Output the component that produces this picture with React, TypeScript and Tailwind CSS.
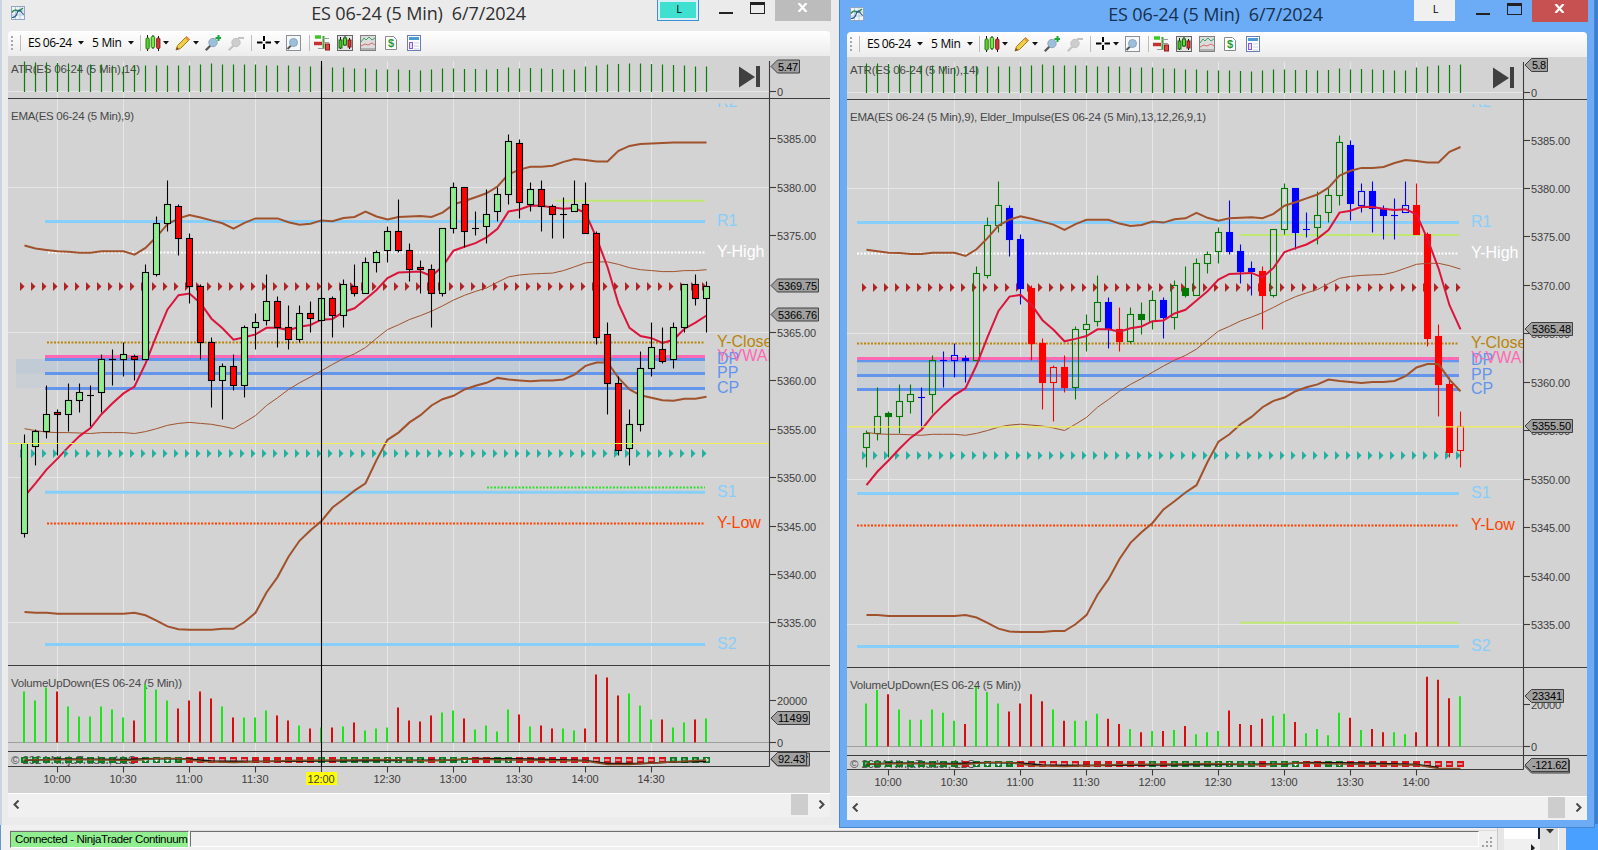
import type { ReactNode } from 'react'

type Bar = [number, number, number, number]

// open, high, low, close for each 5 minute bar, starting at 9:45
const bars: Bar[] = [
  [5344.25, 5354.5, 5343.75, 5353.5],
  [5353.25, 5355, 5351.25, 5354.75],
  [5354.75, 5359.5, 5354, 5356.5],
  [5356.75, 5357, 5352.25, 5356.5],
  [5356.5, 5359.75, 5354.75, 5358],
  [5358, 5359.75, 5356.75, 5358.75],
  [5358.5, 5359.5, 5355.25, 5358.5],
  [5358.75, 5362.75, 5356.75, 5362.25],
  [5362.25, 5363.25, 5359.5, 5362.25],
  [5362.25, 5364, 5360.5, 5362.75],
  [5362.5, 5362.75, 5360, 5362.25],
  [5362.25, 5372, 5362.25, 5371.25],
  [5371, 5377, 5370.75, 5376.25],
  [5376.25, 5380.75, 5375.5, 5378.25],
  [5378, 5378.25, 5373, 5374.75],
  [5374.75, 5375.25, 5368, 5369.75],
  [5369.75, 5370, 5362.25, 5364],
  [5364, 5364.5, 5357.25, 5360],
  [5360, 5361.75, 5356, 5361.5],
  [5361.5, 5362.75, 5359, 5359.5],
  [5359.5, 5365.75, 5358.25, 5365.5],
  [5365.5, 5367, 5363.25, 5366],
  [5366.25, 5371, 5365.75, 5368.25],
  [5368.25, 5368.75, 5363.5, 5365.5],
  [5365.5, 5367.75, 5363.25, 5364.25],
  [5364.25, 5367.75, 5364, 5367],
  [5367, 5368.25, 5365, 5366.5],
  [5366.25, 5369.5, 5365.5, 5368.5],
  [5368.5, 5368.75, 5364.5, 5366.75],
  [5366.75, 5370.5, 5365.5, 5370],
  [5369.75, 5372, 5368.75, 5369],
  [5369, 5372.75, 5369, 5372.25],
  [5372.25, 5373.5, 5371.25, 5373.25],
  [5373.5, 5376, 5372.25, 5375.5],
  [5375.5, 5378.75, 5373.25, 5373.5],
  [5373.5, 5374.25, 5370.25, 5371.5],
  [5371.75, 5372.5, 5369, 5371.5],
  [5371.5, 5372, 5365.5, 5369],
  [5369, 5375.75, 5368.75, 5375.75],
  [5375.75, 5380.5, 5375.25, 5380],
  [5380, 5380, 5373.75, 5375.5],
  [5375.75, 5377.5, 5375, 5375.75],
  [5376, 5379.75, 5374.25, 5377.25],
  [5377.5, 5380, 5376.5, 5379.25],
  [5379.25, 5385.5, 5378.25, 5384.75],
  [5384.5, 5385, 5376.75, 5378.5],
  [5378.25, 5380.5, 5377.5, 5379.75],
  [5379.75, 5380.75, 5375.5, 5378],
  [5378, 5378.25, 5374.75, 5377.25],
  [5377.25, 5379, 5374.75, 5377.25],
  [5377.5, 5380.75, 5377.5, 5378.25],
  [5378.25, 5380.5, 5375.25, 5375.25],
  [5375.25, 5375.5, 5363.75, 5364.5],
  [5364.75, 5366, 5356.5, 5359.75],
  [5359.75, 5360.5, 5352.25, 5352.75],
  [5353, 5357, 5351.25, 5355.5],
  [5355.5, 5363, 5354.75, 5361.25],
  [5361.25, 5366, 5360.5, 5363.5],
  [5363.25, 5365.5, 5361.75, 5362],
  [5362.25, 5366, 5361.25, 5365.5],
  [5365.5, 5370, 5365, 5370],
  [5370, 5371, 5367.75, 5368.5],
  [5368.5, 5370.25, 5365, 5369.75],
]

const upper = [
  5374, 5373.7, 5373.55, 5373.4, 5373.35, 5373.25, 5373.25, 5373.4, 5373.4, 5373.4, 5373.05, 5373.75, 5374.9,
  5376.2, 5376.8, 5377.15, 5376.9, 5376.6, 5376.3, 5375.75, 5376.35, 5376.8, 5376.8, 5376.8, 5376.4, 5376.15,
  5376.25, 5376.6, 5376.5, 5376.85, 5376.95, 5377.5, 5377, 5376.7, 5376.95, 5377, 5377.05, 5376.95, 5377.4,
  5378.25, 5378.6, 5379, 5379.4, 5380.1, 5381.35, 5381.85, 5382.15, 5382.15, 5382.25, 5382.65, 5382.95, 5382.85,
  5382.7, 5382.7, 5383.8, 5384.3, 5384.5, 5384.55, 5384.6, 5384.65, 5384.65, 5384.65, 5384.65,
]

const middle = [
  5355.05, 5354.85, 5354.7, 5354.65, 5354.65, 5354.6, 5354.55, 5354.65, 5354.65, 5354.65, 5354.55, 5354.75, 5355.05,
  5355.4, 5355.6, 5355.7, 5355.6, 5355.5, 5355.3, 5355.05, 5355.7, 5356.4, 5357.45, 5358.25, 5359.1, 5359.8,
  5360.4, 5361.05, 5361.7, 5362.3, 5362.8, 5363.45, 5364.4, 5365.3, 5365.8, 5366.35, 5366.75, 5367.2, 5367.75,
  5368.35, 5368.85, 5369.25, 5369.6, 5370.2, 5370.75, 5370.95, 5371.05, 5371.1, 5371.15, 5371.4, 5371.8, 5372.2,
  5372.3, 5372.3, 5372.05, 5371.7, 5371.5, 5371.4, 5371.3, 5371.3, 5371.4, 5371.4, 5371.5,
]

// the first stretch is nearly flat, so it is kept apart from the mirrored values
const lowerStart = [
  5336.1, 5336, 5336, 5335.9, 5335.9, 5335.9, 5335.9, 5335.9, 5335.9, 5335.9, 5336, 5335.75, 5335.2, 5334.6, 5334.3,
  5334.25, 5334.25, 5334.25, 5334.35, 5334.35,
]
const lower = middle.map((m, i) => lowerStart[i] ?? 2 * m - upper[i])

const ema = bars.reduce<number[]>((acc, bar) => {
  acc.push(acc.length ? acc[acc.length - 1] * 0.8 + bar[3] * 0.2 : 5348.06)
  return acc
}, [])

const atr = [
  30, 29, 29, 28.5, 28, 27, 27, 27, 26, 25, 26, 26, 26, 26, 26, 26, 27, 28, 27, 27, 27, 27, 26, 26, 26, 25, 25, 25, 24,
  24, 23, 23, 22, 22, 22, 21.5, 21, 22, 23, 23, 22.5, 22.5, 22, 22.5, 24, 23, 23.5, 23, 22.5, 22, 22, 25, 26, 27, 27.5,
  28, 28, 27.5, 27, 26.5, 26, 25, 25,
]

const volume = [
  51, 42, 55, 51, 36, 26, 26, 36, 33, 25, 22, 58, 53, 42, 34, 42, 51, 44, 36, 25, 25, 25, 32, 27, 22, 17, 14, 15, 15,
  16, 20, 12, 14, 15, 35, 22, 21, 27, 30, 32, 24, 13, 17, 11, 33, 28, 16, 17, 14, 14, 12, 14, 68, 65, 47, 49, 37, 23,
  23, 15, 20, 23, 24,
]
const volumeColors = 'gggrggggggrgggrrrrgrgggrrgrgrgrgggrrrrggrggggrgrrggrrrrgggrggrg'

// w and R mark bars with a white centre in the bottom panel
const trend = 'ggggggggggrwwwgrRRRRRrrrrrrgrggggwwggrggwrrgwrrrrrrrRRRRRRRgggw'

// offsets of the two lines that run through the bottom panel, as [bar, dy]
const signalBlack: [number, number][] = [
  [0, 0.5], [3, -1], [9, -0.5], [12, -1.5], [15, -1], [17, 1], [21, 1.5], [27, 1], [34, 0.5], [39, 0], [41, -1.5], [46, -1], [51, 0.5], [53, 3.5], [56, 3.5], [59, 2], [62, 1.5],
]
const signalBrown: [number, number][] = [
  [0, 0], [5, -0.5], [10, 0.5], [12, -1.5], [14, -1.5], [16, 1.5], [19, 2.5], [24, 0.5], [33, -0.5], [37, 1], [40, -1], [44, 0], [51, 1], [53, 4.5], [55, 4.5], [58, 2.5], [62, 0],
]

const impulse = 'ggggggbgbbbgggbbrrrrgggbrgggbgggggbbbrggbbgggbbbbbbrrrrr'
const impulseColors: Record<string, string> = { g: '#007a00', b: '#0000ff', r: '#ff0000' }

interface Level {
  y: number
  color: string
  from: number
  label?: string
  kind?: 'dotted'
  width?: number
}

interface Tag {
  y: number
  right: number
  text: string
}

interface ChartConfig {
  left: number
  top: number
  right: number
  bottom: number
  axis: number
  x0: number
  first: number
  last: number
  y5380: number
  scale: number
  separators: number[]
  atrBase: number
  volumeBase: number
  volumeScale: number
  timeLine: number
  trendY: number
  levels: Level[]
  levelEnd: number
  zone: { from: number; top: number; mid: number; bottom: number }
  priceLine: number
  arrows: [number, number]
  prices: { p: number; y: number }[]
  tags: Tag[]
  times: string[]
  firstTime: number
  title: string
  titleWidth: number
  cursor?: number
  impulse?: boolean
}

const leftChart: ChartConfig = {
  left: 8,
  top: 56,
  right: 830,
  bottom: 793,
  axis: 769.5,
  x0: 24.5,
  first: 0,
  last: 62,
  y5380: 187.5,
  scale: 9.667,
  separators: [98.5, 665.5, 751.5],
  atrBase: 91.5,
  volumeBase: 742.5,
  volumeScale: 1,
  timeLine: 766.5,
  trendY: 760,
  levelEnd: 705,
  levels: [
    { y: 102.5, color: '#87cefa', from: 0, label: 'R2', width: 0 },
    { y: 200.8, color: '#bfe872', from: 555, width: 2 },
    { y: 221.5, color: '#87cefa', from: 45, label: 'R1' },
    { y: 252.5, color: '#ffffff', from: 48, label: 'Y-High', kind: 'dotted' },
    { y: 342.5, color: '#b8860b', from: 47, label: 'Y-Close', kind: 'dotted' },
    { y: 359.5, color: '#6495ed', from: 45, label: 'DP' },
    { y: 356.5, color: '#ff69b4', from: 45, label: 'Y-VWAP' },
    { y: 373.5, color: '#6495ed', from: 45, label: 'PP' },
    { y: 388.5, color: '#6495ed', from: 45, label: 'CP' },
    { y: 487.5, color: '#32e032', from: 487, kind: 'dotted' },
    { y: 492.3, color: '#87cefa', from: 45, label: 'S1' },
    { y: 523.5, color: '#ff4500', from: 47, label: 'Y-Low', kind: 'dotted' },
    { y: 644.5, color: '#87cefa', from: 45, label: 'S2' },
  ],
  zone: { from: 16, top: 359, mid: 373.5, bottom: 388 },
  priceLine: 443.5,
  arrows: [286.5, 453.5],
  prices: [
    { p: 5385, y: 138.5 },
    { p: 5380, y: 187.5 },
    { p: 5375, y: 235.5 },
    { p: 5365, y: 332.5 },
    { p: 5360, y: 380.5 },
    { p: 5355, y: 429.5 },
    { p: 5350, y: 477.5 },
    { p: 5345, y: 526.5 },
    { p: 5340, y: 574.5 },
    { p: 5335, y: 622.5 },
  ],
  tags: [
    { y: 66.5, right: 800, text: '5.47' },
    { y: 285.5, right: 819, text: '5369.75' },
    { y: 314.5, right: 819, text: '5366.76' },
    { y: 718, right: 810, text: '11499' },
    { y: 759.5, right: 810, text: '-92.437' },
    { y: 759, right: 807, text: '92.43' },
  ],
  times: ['10:00', '10:30', '11:00', '11:30', '12:00', '12:30', '13:00', '13:30', '14:00', '14:30'],
  firstTime: 57.5,
  title: 'EMA(ES 06-24 (5 Min),9)',
  titleWidth: 123,
  cursor: 321.5,
}

const rightChart: ChartConfig = {
  left: 847,
  top: 57,
  right: 1587,
  bottom: 796,
  axis: 1523.5,
  x0: 855.5,
  first: 1,
  last: 55,
  y5380: 188.7,
  scale: 9.69,
  separators: [99.5, 667.5, 755.5],
  atrBase: 92.5,
  volumeBase: 746.5,
  volumeScale: 1.026,
  timeLine: 769.5,
  trendY: 764,
  levelEnd: 1459,
  levels: [
    { y: 102, color: '#87cefa', from: 0, label: 'R2', width: 0 },
    { y: 222.5, color: '#87cefa', from: 857, label: 'R1' },
    { y: 235, color: '#bfe872', from: 1240, width: 2 },
    { y: 253.5, color: '#ffffff', from: 857, label: 'Y-High', kind: 'dotted' },
    { y: 343.5, color: '#b8860b', from: 857, label: 'Y-Close', kind: 'dotted' },
    { y: 360.8, color: '#6495ed', from: 857, label: 'DP' },
    { y: 358.5, color: '#ff69b4', from: 857, label: 'Y-VWAP' },
    { y: 375.5, color: '#6495ed', from: 857, label: 'PP' },
    { y: 389.5, color: '#6495ed', from: 857, label: 'CP' },
    { y: 493.5, color: '#87cefa', from: 857, label: 'S1' },
    { y: 525.5, color: '#ff4500', from: 857, label: 'Y-Low', kind: 'dotted' },
    { y: 622.8, color: '#bfe872', from: 1240, width: 2 },
    { y: 646.5, color: '#87cefa', from: 857, label: 'S2' },
  ],
  zone: { from: 857, top: 361, mid: 375, bottom: 389 },
  priceLine: 426.8,
  arrows: [287.5, 455.5],
  prices: [
    { p: 5385, y: 140.5 },
    { p: 5380, y: 188.5 },
    { p: 5375, y: 236.5 },
    { p: 5370, y: 285.5 },
    { p: 5365, y: 333.5 },
    { p: 5360, y: 382.5 },
    { p: 5355, y: 430.5 },
    { p: 5350, y: 479.5 },
    { p: 5345, y: 527.5 },
    { p: 5340, y: 576.5 },
    { p: 5335, y: 624.5 },
  ],
  tags: [
    { y: 65, right: 1548, text: '5.8' },
    { y: 329, right: 1573, text: '5365.48' },
    { y: 426, right: 1573, text: '5355.50' },
    { y: 696, right: 1564, text: '23341' },
    { y: 766.5, right: 1570, text: '' },
    { y: 765, right: 1569, text: '-121.62' },
  ],
  times: ['10:00', '10:30', '11:00', '11:30', '12:00', '12:30', '13:00', '13:30', '14:00'],
  firstTime: 888.5,
  title: 'EMA(ES 06-24 (5 Min),9), Elder_Impulse(ES 06-24 (5 Min),13,12,26,9,1)',
  titleWidth: 356,
  impulse: true,
}

function Chart({ c }: { c: ChartConfig }) {
  const x = (i: number) => c.x0 + i * 11
  const y = (p: number) => c.y5380 + (5380 - p) * c.scale
  const px = (p: number) => Math.floor(y(p)) + 0.5
  const range = bars.map((_, i) => i).filter((i) => i >= c.first && i <= c.last)
  const points = (values: number[]) => range.map((i) => `${x(i)},${y(values[i]).toFixed(1)}`).join(' ')
  const signal = (values: [number, number][]) =>
    values
      .filter(([i]) => i <= c.last)
      .map(([i, dy]) => `${x(Math.max(i, c.first))},${c.trendY + dy}`)
      .join(' ')
  const labelX = c.levelEnd + 12
  const clipId = `labels-${c.left}`
  const width = c.right - c.left
  const height = c.bottom - c.top

  const candles = range.map((i) => {
    const [o, h, l, cl] = bars[i]
    const top = px(Math.max(o, cl))
    const bottom = px(Math.min(o, cl))
    const up = cl > o
    const stroke = c.impulse ? impulseColors[impulse[i]] : '#000000'
    const fill = c.impulse ? (up ? 'none' : stroke) : up ? '#90ee90' : '#ff0000'
    return (
      <g key={i} stroke={stroke} strokeWidth={1.1}>
        <line x1={x(i)} x2={x(i)} y1={px(h)} y2={top} />
        <line x1={x(i)} x2={x(i)} y1={bottom} y2={px(l)} />
        {o === cl ? (
          <line x1={x(i) - 3.5} x2={x(i) + 3.5} y1={top} y2={top} />
        ) : (
          <rect x={x(i) - 3} y={top} width={6} height={bottom - top} fill={fill} />
        )}
      </g>
    )
  })

  const emaLine = <polyline points={points(ema)} fill="none" stroke="#dc143c" strokeWidth={2} />
  const bands = (
    <g fill="none" stroke="#a0522d">
      <polyline points={points(upper)} strokeWidth={2} />
      <polyline points={points(middle)} strokeWidth={1} />
      <polyline points={points(lower)} strokeWidth={2} />
    </g>
  )

  return (
    <svg
      className="block shrink-0 bg-[#d3d3d3]"
      width={width}
      height={height}
      viewBox={`${c.left} ${c.top} ${width} ${height}`}
      fontFamily="'Liberation Sans', Arial, sans-serif"
    >
      <defs>
        <clipPath id={clipId}>
          <rect x={c.left} y={c.separators[0] + 5} width={c.axis - c.left} height={600} />
        </clipPath>
      </defs>

      {/* Grid */}
      <g stroke="#e6e6e6" strokeWidth={1}>
        {c.times.map((t, i) => (
          <line key={t} x1={c.firstTime + i * 66} x2={c.firstTime + i * 66} y1={c.top + 5} y2={c.timeLine} />
        ))}
        {c.prices
          .filter(({ p }) => [5380, 5365, 5350, 5335].includes(p))
          .map(({ p, y: py }) => (
            <line key={p} x1={c.left} x2={c.axis} y1={py} y2={py} />
          ))}
        <line x1={c.left} x2={c.axis} y1={c.atrBase} y2={c.atrBase} />
      </g>
      <line x1={c.left} x2={c.axis} y1={c.volumeBase} y2={c.volumeBase} stroke="#a0a0a0" />

      {/* Pivot zone */}
      <rect x={c.zone.from} y={c.zone.top} width={c.levelEnd - c.zone.from} height={c.zone.mid - c.zone.top} fill="#87b4dc" opacity={0.25} />
      <rect x={c.zone.from} y={c.zone.mid} width={c.levelEnd - c.zone.from} height={c.zone.bottom - c.zone.mid} fill="#9bbede" opacity={0.18} />

      {/* Levels */}
      {c.levels.map((l) =>
        l.width === 0 ? null : (
          <line
            key={`${l.color}-${l.y}`}
            x1={l.from}
            x2={c.levelEnd}
            y1={l.y}
            y2={l.y}
            stroke={l.color}
            strokeWidth={l.kind === 'dotted' ? 2 : (l.width ?? 3)}
            strokeDasharray={l.kind === 'dotted' ? '2 1.5' : undefined}
          />
        ),
      )}
      <g clipPath={`url(#${clipId})`} fontSize={16}>
        {c.levels
          .filter((l) => l.label)
          .map((l) => (
            <text key={l.label} x={labelX} y={Math.round(l.y + 4.6)} fill={l.color}>
              {l.label}
            </text>
          ))}
      </g>

      {!c.impulse && bands}
      {!c.impulse && emaLine}

      {/* Arrow rows */}
      {range.map((i) => (
        <g key={i}>
          <path d={`M${x(i) - 4.5} ${c.arrows[0] - 4.5}l4.5 4.5l-4.5 4.5z`} fill="#b22222" />
          <path d={`M${x(i) - 4.5} ${c.arrows[1] - 4.5}l4.5 4.5l-4.5 4.5z`} fill="#20b2a0" />
        </g>
      ))}

      {candles}
      {c.impulse && bands}
      {c.impulse && emaLine}
      <line x1={c.left} x2={c.axis} y1={c.priceLine} y2={c.priceLine} stroke="#f0ee50" strokeWidth={1.2} />

      {/* Panel titles */}
      <g fontSize={11.5} fill="#484848">
        <text x={c.left + 3} y={c.top + 16.5} textLength={129}>
          ATR(ES 06-24 (5 Min),14)
        </text>
        <text x={c.left + 3} y={c.separators[0] + 21.5} textLength={c.titleWidth}>
          {c.title}
        </text>
        <text x={c.left + 3} y={c.separators[1] + 21.5} textLength={171}>
          VolumeUpDown(ES 06-24 (5 Min))
        </text>
        <text x={c.left + 3} y={c.trendY + 4} textLength={125}>
          © 2024 NinjaTrader, LLC
        </text>
      </g>

      {/* ATR and volume */}
      {range.map((i) => (
        <g key={i}>
          <line x1={x(i)} x2={x(i)} y1={c.atrBase + 0.5} y2={c.atrBase - atr[i]} stroke="#0b7d0b" strokeWidth={1.2} />
          <line
            x1={x(i) - 0.5}
            x2={x(i) - 0.5}
            y1={c.volumeBase}
            y2={c.volumeBase - volume[i] * c.volumeScale}
            stroke={volumeColors[i] === 'g' ? '#1ae61a' : '#d80c0c'}
            strokeWidth={2}
          />
        </g>
      ))}

      {/* Trend strip */}
      <line x1={x(c.first) - 4} x2={x(c.last) + 4} y1={c.trendY} y2={c.trendY} stroke="#a8e4d8" strokeWidth={4} />
      {range.map((i) => {
        const t = trend[i]
        const color = t === 'r' || t === 'R' ? '#d8121a' : '#0f7a22'
        return (
          <g key={i}>
            <rect x={x(i) - 3.5} y={c.trendY - 3} width={7} height={6} fill={color} />
            {t === 'R' && <rect x={x(i) - 3} y={c.trendY - 0.5} width={5} height={1} fill="#ffffff" />}
            {t === 'w' && <path d={`M${x(i) - 2} ${c.trendY}h4M${x(i)} ${c.trendY - 2}v4`} stroke="#ffffff" strokeWidth={1.4} />}
            {t === 'g' && <rect x={x(i) - 1.5} y={c.trendY - 1.5} width={2.5} height={2} fill="#8fb58f" />}
          </g>
        )
      })}
      <polyline points={signal(signalBlack)} fill="none" stroke="#111111" strokeWidth={1.5} />
      <polyline points={signal(signalBrown)} fill="none" stroke="#8a4a20" strokeWidth={1.7} />

      {/* Skip to latest bar */}
      <g fill="#404040">
        <path d={`M${c.axis - 30.5} ${c.top + 10.5}l16 10.5l-16 10.5z`} />
        <rect x={c.axis - 13.5} y={c.top + 10} width={4} height={21} />
      </g>

      {/* Axes */}
      <g stroke="#3c3c3c" strokeWidth={1.1}>
        {c.separators.map((s) => (
          <line key={s} x1={c.left} x2={c.right} y1={s} y2={s} />
        ))}
        <line x1={c.left} x2={c.axis} y1={c.timeLine} y2={c.timeLine} />
        <line x1={c.axis} x2={c.axis} y1={c.top + 5} y2={c.timeLine} />
        {[...c.prices.map((p) => p.y), c.atrBase, c.volumeBase, c.volumeBase - 42].map((ty) => (
          <line key={ty} x1={c.axis} x2={c.axis + 6.5} y1={ty} y2={ty} />
        ))}
        {c.times.map((t, i) => (
          <line key={t} x1={c.firstTime + i * 66} x2={c.firstTime + i * 66} y1={c.timeLine} y2={c.timeLine + 6} />
        ))}
      </g>
      {c.cursor && (
        <>
          <line x1={c.cursor} x2={c.cursor} y1={c.top + 5} y2={c.timeLine} stroke="#000000" strokeWidth={1.1} />
          <rect x={306} y={772} width={31} height={13} fill="#ffff00" />
        </>
      )}
      <g fontSize={11} fill="#404040">
        {c.prices.map(({ p, y: py }) => (
          <text key={p} x={c.axis + 7.5} y={py + 4} textLength={39}>
            {p.toFixed(2)}
          </text>
        ))}
        <text x={c.axis + 7.5} y={c.atrBase + 4}>0</text>
        <text x={c.axis + 7.5} y={c.volumeBase + 4}>0</text>
        <text x={c.axis + 7.5} y={c.volumeBase - 38} textLength={30}>20000</text>
        {c.times.map((t, i) => (
          <text key={t} x={c.firstTime + i * 66 - 14} y={c.timeLine + 16.5} textLength={27}>
            {t}
          </text>
        ))}
      </g>

      {/* Value tags */}
      {c.tags.map((tag) => (
        <g key={tag.text}>
          <path
            d={`M${c.axis + 1.5} ${tag.y}l6.5 -6.5H${tag.right - 0.5}v13H${c.axis + 8}z`}
            fill="#a0a0a0"
            stroke="#404040"
          />
          <text x={c.axis + 8.5} y={tag.y + 4} fontSize={11} fill="#000000" textLength={tag.right - c.axis - 10.5}>
            {tag.text}
          </text>
        </g>
      ))}
    </svg>
  )
}

function Caret({ className }: { className: string }) {
  return (
    <svg className={`shrink-0 ${className}`} width="6" height="4" viewBox="0 0 6 4">
      <path d="M0 0h6L3 3.5z" fill="#111" />
    </svg>
  )
}

function Separator({ className }: { className: string }) {
  return <div className={`h-4 w-px shrink-0 bg-[#bdbdbd] ${className}`} />
}

function Icon({ className, children }: { className: string; children: ReactNode }) {
  return (
    <svg className={`shrink-0 ${className}`} width="16" height="16" viewBox="0 0 16 16" fill="none">
      {children}
    </svg>
  )
}

function Toolbar() {
  return (
    <div className="flex h-[25px] shrink-0 items-center rounded-t bg-linear-to-b from-white to-[#ececec] pb-[2px] font-['Open_Sans','Noto_Sans',sans-serif] text-[12px] text-black">
      <svg className="ml-[3px] shrink-0" width="2" height="16">
        <path d="M1 1v14" stroke="#a8a8a8" strokeWidth="2" strokeDasharray="2 2" />
      </svg>
      <Separator className="ml-[7px]" />
      <span className="ml-[7px] w-[45px] shrink-0 tracking-[-0.5px] whitespace-nowrap">ES 06-24</span>
      <Caret className="ml-[5px]" />
      <span className="ml-[8px] w-[31px] shrink-0 tracking-[-0.3px] whitespace-nowrap">5 Min</span>
      <Caret className="ml-[5px]" />
      <Separator className="ml-[6px]" />

      {/* Chart style */}
      <Icon className="ml-[4px]">
        <path d="M2.5 0v16M8 0v14M13.5 1v15" stroke="#111" />
        <rect x="1" y="3" width="3.2" height="11" rx="1" fill="#5fd12e" stroke="#247a12" />
        <rect x="6.2" y="1.5" width="3.5" height="11" rx="1" fill="#7be83e" stroke="#247a12" />
        <rect x="11.7" y="3" width="3.2" height="10.5" rx="1" fill="#d63a3a" stroke="#7d1717" />
      </Icon>
      <Caret className="ml-[2px]" />

      {/* Drawing tools */}
      <Icon className="ml-[6px]">
        <path d="M1 15l1.5-4.5L11.5 1.5l3 3L5.5 13.5z" fill="#f1cf45" stroke="#a87b1c" />
        <path d="M10 3l3 3 1.8-1.8L11.700 1.300z" fill="#e8903c" />
        <path d="M1 15l1-3 2 2z" fill="#7a4a2a" />
      </Icon>
      <Caret className="ml-[2px]" />

      {/* Zoom in */}
      <Icon className="ml-[6px]">
        <path d="M5.5 10.5L.8 15.2" stroke="#555" strokeWidth="2.2" />
        <circle cx="8" cy="7.5" r="4.2" fill="#9cc0dc" stroke="#8fa5ba" />
        <path d="M13.500 0v6M10.500 3h6" stroke="#17a83a" strokeWidth="2" />
      </Icon>
      <Icon className="ml-[7px]">
        <path d="M5.5 10.5L.8 15.2" stroke="#c4c4c4" strokeWidth="2.2" />
        <circle cx="8" cy="7.5" r="4.2" fill="#cdcdcd" stroke="#c2c2c2" />
        <path d="M10 3h6" stroke="#c2c2c2" strokeWidth="2" />
      </Icon>
      <Separator className="ml-[7px]" />

      {/* Crosshair */}
      <Icon className="ml-[5px]">
        <path d="M7 1v5M7 9v5M0 7.500h5.500M8.500 7.500h5.500" stroke="#000" strokeWidth="2" />
      </Icon>
      <Caret className="ml-[1px]" />
      <Icon className="ml-[5px]">
        <rect x="1.5" y=".5" width="14" height="15" fill="#f6f8fa" stroke="#8a8f98" />
        <path d="M6 10.500L2.500 14" stroke="#555" strokeWidth="2" />
        <circle cx="8.5" cy="7.5" r="4" fill="#9cc0dc" stroke="#8aa5bd" />
      </Icon>
      <Separator className="ml-[8px]" />

      {/* Chart trader */}
      <Icon className="ml-[4px]">
        <path d="M1 2h6" stroke="#3fc42a" strokeWidth="3.5" />
        <path d="M0 8.500h8" stroke="#c93030" strokeWidth="3.5" />
        <path d="M9.500 1v13" stroke="#3aa52c" strokeWidth="2" />
        <path d="M9 3.500h6M9 7.500h6M4 13.500h6" stroke="#999" />
        <rect x="11.5" y="9" width="4" height="6" fill="#e04848" stroke="#8d1c1c" />
      </Icon>

      {/* Data series */}
      <Icon className="ml-[7px]">
        <rect x=".5" y=".5" width="15" height="15" fill="#e4e4e4" stroke="#666" />
        <path d="M3.500 2v12M8 1v10M12.500 3v11" stroke="#111" />
        <rect x="2" y="5" width="3" height="8" fill="#3fc428" stroke="#1b6a10" />
        <rect x="6.5" y="3" width="3" height="7" fill="#5fe03c" stroke="#1b6a10" />
        <rect x="11" y="5" width="3" height="7" fill="#d33" stroke="#7d1717" />
      </Icon>

      {/* Indicators */}
      <Icon className="ml-[7px]">
        <rect x=".5" y=".5" width="15" height="15" fill="#dcdcdc" stroke="#808080" />
        <path d="M1 7l3-4 2 2 3-3 3 3 3-2" stroke="#3aa564" />
        <path d="M1 11l4-2 3 1 4-2 3 2" stroke="#d96a6a" />
        <path d="M1 14h14" stroke="#b0b0b0" strokeWidth="2" />
      </Icon>

      {/* Strategies */}
      <Icon className="ml-[7px]">
        <path d="M2.500 1.500h8l3 3v10h-11z" fill="#fff" stroke="#8a8a8a" />
        <text x="8" y="12" textAnchor="middle" fontSize="11" fontWeight="700" fill="#1f9a2e" fontFamily="Liberation Sans">
          $
        </text>
      </Icon>

      {/* Properties */}
      <Icon className="ml-[7px]">
        <rect x="1.5" y=".5" width="13" height="15" fill="#fff" stroke="#6a7fb5" />
        <path d="M3 3.500h10" stroke="#4a9ad4" strokeWidth="3" />
        <rect x="3.5" y="7.5" width="3" height="6" fill="#e6dcff" stroke="#8a5ad8" />
        <path d="M8 8h5M8 11h5M8 14h5" stroke="#c3d0ea" />
      </Icon>
    </div>
  )
}

function TitleBar({ active }: { active?: boolean }) {
  return (
    <div className={`relative flex shrink-0 items-start justify-end ${active ? 'h-8' : 'h-[31px]'}`}>
      <svg className={`mr-auto ml-[3px] ${active ? 'mt-[7px]' : 'mt-[6px]'}`} width="14" height="14" viewBox="0 0 14 14">
        <rect x=".5" y=".5" width="13" height="13" fill="#eef6fb" stroke="#93a5c4" />
        <path d="M4.5 1v12M9 1v12M1 5h12M1 9h12" stroke="#b9c6dd" />
        <path d="M1 6.5c2-3 3-3 5-2s2 1 6-2.500" stroke="#2f8f4a" strokeWidth="1.6" fill="none" />
        <path d="M1 11.5c3 0 4-1 5-4s2-5 4-2 2 3 3 3" stroke="#2a5d8f" strokeWidth="1.2" fill="none" />
      </svg>
      <div
        className={`absolute inset-x-0 text-center font-['Open_Sans','Noto_Sans',sans-serif] text-[18px] leading-7 tracking-[-0.12px] whitespace-pre ${
          active ? 'top-0 right-[4px] text-[#16304f]' : '-top-px right-[2px] text-[#2f2f2f]'
        }`}
      >
        ES 06-24 (5 Min)  6/7/2024
      </div>
      <div
        className={`relative flex justify-center pl-[2px] font-['Open_Sans',sans-serif] text-[11px] leading-[17px] text-black ${
          active
            ? 'h-[21px] w-[41px] bg-[#f0f0f0]'
            : 'h-[21px] w-[42px] border-x border-b border-[#3f8fd6] bg-[#40e0d0] shadow-[inset_0_0_0_2px_#d9eef5]'
        }`}
      >
        L
      </div>
      <div className={`relative h-[2px] w-[14px] bg-[#222] ${active ? 'mt-[13px] ml-[21px]' : 'mt-[12px] ml-[20px]'}`} />
      <div className={`relative ml-[17px] h-3 w-[15px] border border-t-[3px] border-[#222] ${active ? 'mt-[3px]' : 'mt-[2px]'}`} />
      <div className={`relative ml-[10px] flex w-[56px] justify-center pr-[2px] ${active ? 'h-[22px] bg-[#c75050]' : 'h-[21px] bg-[#bcbcbc]'}`}>
        <svg className={active ? 'mt-1' : 'mt-[3px]'} width="11" height="9" viewBox="0 0 11 9">
          <path d="M1.5 0l8 9M9.5 0l-8 9" stroke="#fff" strokeWidth="2.2" />
        </svg>
      </div>
    </div>
  )
}

function ScrollBar() {
  return (
    <div className="flex h-6 shrink-0 items-center border-t border-white bg-[#f0f0f0] pb-[2px]">
      <svg className="ml-1 shrink-0" width="8" height="9" viewBox="0 0 8 9">
        <path d="M6.5 .5L2.5 4.5l4 4" stroke="#484848" strokeWidth="2" fill="none" />
      </svg>
      <div className="ml-auto h-[21px] w-[17px] bg-[#cdcdcd]" />
      <svg className="mr-1 ml-[10px] shrink-0" width="8" height="9" viewBox="0 0 8 9">
        <path d="M1.5 .5l4 4-4 4" stroke="#484848" strokeWidth="2" fill="none" />
      </svg>
    </div>
  )
}

function StatusBar() {
  return (
    <div className="absolute top-[824px] left-0 flex h-[26px] w-[1566px] border-l border-[#5b9bd5] bg-[#f0f0f0]">
      <div className="flex w-[1496px] flex-col pl-[9px]">
        <div className="h-[7px] border-t border-b border-t-[#cfcfcf] border-b-[#dcdcdc]" />
        <div className="flex h-[17px]">
          <div className="flex h-[17px] w-[179px] items-center border border-t-[#707070] border-r-white border-b-white border-l-[#707070] bg-[#90ee90] pl-[4px] font-['Liberation_Sans',sans-serif] text-[11.5px] tracking-[-0.36px] whitespace-nowrap text-black">
            Connected - NinjaTrader Continuum
          </div>
          <div className="ml-[1px] h-[16px] w-[1289px] border border-t-[#707070] border-r-white border-b-white border-l-[#707070]" />
          <svg className="mt-[6px] ml-[3px]" width="11" height="11">
            <g fill="#a0a0a0">
              <rect x="8" y="0" width="2" height="2" />
              <rect x="4" y="4" width="2" height="2" />
              <rect x="8" y="4" width="2" height="2" />
              <rect x="0" y="8" width="2" height="2" />
              <rect x="4" y="8" width="2" height="2" />
              <rect x="8" y="8" width="2" height="2" />
            </g>
          </svg>
        </div>
      </div>
      <div className="w-[7px] border-l border-[#c8c8c8] bg-[#e6e6e6]" />
      <div className="flex w-[36px] flex-col bg-[#f0f0f0]">
        <div className="h-4 border-r-2 border-[#14203c] bg-white" />
        <svg className="mt-[5px] ml-auto" width="10" height="6">
          <path d="M1 0l4 4-4 4z" fill="#222" />
        </svg>
      </div>
      <div className="w-[18px] bg-[#dedede] pl-[5px]">
        <svg className="mt-[5px]" width="10" height="5">
          <path d="M1 0h8L5 4.5z" fill="#333" />
        </svg>
      </div>
      <div className="flex-1 border-l border-white bg-[#e8e8e8]" />
    </div>
  )
}

export default function App() {
  return (
    <div className="relative h-[850px] w-[1598px] overflow-hidden bg-[#4aa0ff]">
      <div className="absolute top-0 right-0 h-[824px] w-[4px] bg-[#3b7fd6]" />
      <StatusBar />

      {/* Background chart window */}
      <div className="absolute top-0 left-0 flex h-[825px] w-[839px] flex-col border-l-2 border-[#c9d6e2] bg-[#ebebeb] pr-[9px] pl-[6px]">
        <div className="-mr-[1px] shrink-0">
          <TitleBar />
        </div>
        <Toolbar />
        <Chart c={leftChart} />
        <ScrollBar />
      </div>

      {/* Active chart window */}
      <div className="absolute top-0 left-[839px] flex h-[828px] w-[756px] flex-col border-x border-b border-[#4a86cc] bg-[#6cacf6] px-[7px]">
        <div className="-mr-px shrink-0">
          <TitleBar active />
        </div>
        <Toolbar />
        <Chart c={rightChart} />
        <ScrollBar />
      </div>
    </div>
  )
}
